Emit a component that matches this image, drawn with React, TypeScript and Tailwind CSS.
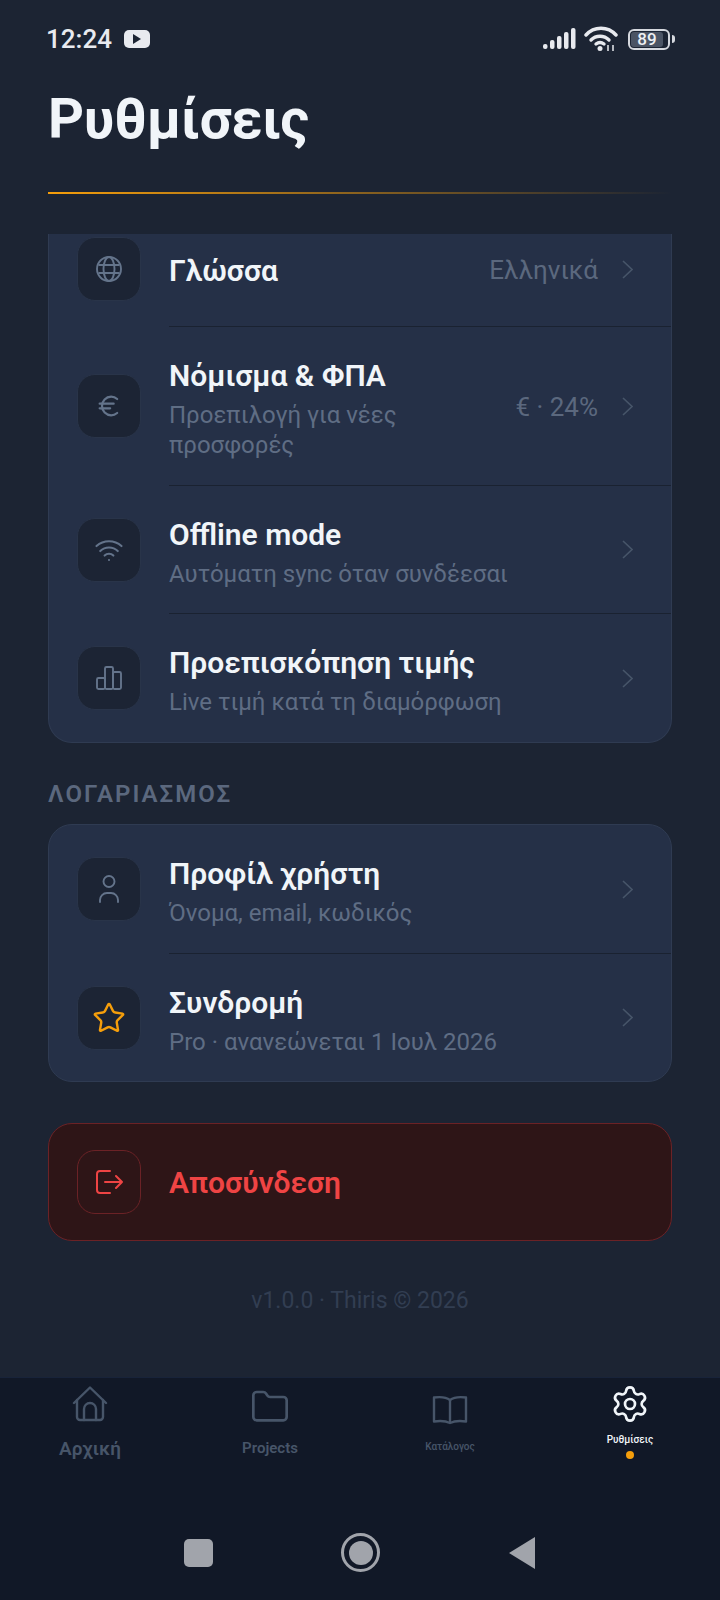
import React from "react";
import { Euro, Folder, Settings, Star, Wifi } from "lucide-react";

const font = { fontFamily: "Roboto, sans-serif" };

const IconBox: React.FC<{ children: React.ReactNode; danger?: boolean }> = ({ children, danger }) => (
  <div
    className={
      danger
        ? "flex h-[64px] w-[64px] shrink-0 items-center justify-center rounded-[18px] border border-[#6b2226] bg-[#2e1517]"
        : "flex h-[64px] w-[64px] shrink-0 items-center justify-center rounded-[18px] border border-[#293449] bg-[#1c2434]"
    }
  >
    {children}
  </div>
);

const Chevron = () => (
  <svg width="11" height="19" viewBox="0 0 11 19" fill="none" stroke="#475569" strokeWidth="1.6" className="ml-[24px] shrink-0">
    <path d="M1 1l9 8.500-9 8.500" />
  </svg>
);

const Row: React.FC<{
  icon: React.ReactNode;
  title: string;
  sub?: string;
  value?: string;
  rowClass?: string;
}> = ({ icon, title, sub, value, rowClass }) => (
  <div className={`flex items-center pl-[28px] pr-[38px] ${rowClass ?? "h-[128px]"}`}>
    <IconBox>{icon}</IconBox>
    <div className={sub ? "ml-[28px] min-w-0 flex-1 pt-[6px]" : "ml-[28px] min-w-0 flex-1 pt-[4px]"}>
      <div className="text-[30px] font-semibold leading-[36px] text-[#f1f5f9]">{title}</div>
      {sub && <div className="mt-[6px] whitespace-pre-line text-[24px] leading-[30px] text-[#5f6d84]">{sub}</div>}
    </div>
    {value && <div className="shrink-0 pt-[2px] text-[26px] text-[#5b687e]">{value}</div>}
    <Chevron />
  </div>
);

const Divider = () => <div className="ml-[120px] h-px bg-[#1a2231]" />;

const GlobeIcon = () => (
  <svg width="28" height="28" viewBox="0 0 28 28" fill="none" stroke="#64748b" strokeWidth="1.9">
    <circle cx="14" cy="14" r="12" />
    <ellipse cx="14" cy="14" rx="5.500" ry="12" />
    <path d="M3.500 10h21M3.500 18h21" />
  </svg>
);

const BarsIcon = () => (
  <svg width="28" height="26" viewBox="0 0 28 26" fill="none" stroke="#64748b" strokeWidth="1.9" strokeLinejoin="round">
    <rect x="2" y="13" width="8" height="11" rx="1.500" />
    <rect x="10" y="2" width="8" height="22" rx="1.500" />
    <rect x="18" y="7" width="8" height="17" rx="1.500" />
  </svg>
);

const PersonIcon = () => (
  <svg width="28" height="30" viewBox="0 0 28 30" fill="none" stroke="#64748b" strokeWidth="1.9" strokeLinecap="round">
    <circle cx="14" cy="7.500" r="5.500" />
    <path d="M5 28v-2a7 7 0 0 1 7-7h4a7 7 0 0 1 7 7v2" />
  </svg>
);

const LogoutIcon = () => (
  <svg width="28" height="26" viewBox="0 0 28 26" fill="none" stroke="#ef4444" strokeWidth="2" strokeLinecap="round" strokeLinejoin="round">
    <path d="M15 2H5a3 3 0 0 0-3 3v16a3 3 0 0 0 3 3h10" />
    <path d="M10 13h17M21 7l6 6-6 6" />
  </svg>
);

const HomeIcon = () => (
  <svg width="36" height="36" viewBox="0 0 36 36" fill="none" stroke="#475569" strokeWidth="2.400" strokeLinecap="round" strokeLinejoin="round">
    <path d="M2 17L18 1.500 34 17" />
    <path d="M5 14v17a3 3 0 0 0 3 3h20a3 3 0 0 0 3-3V14" />
    <path d="M12 34V23a6 6 0 0 1 12 0v11" />
  </svg>
);

const BookIcon = () => (
  <svg width="36" height="30" viewBox="0 0 36 30" fill="none" stroke="#475569" strokeWidth="2.400" strokeLinejoin="round">
    <path d="M18 5C14 2 9 1.500 2 2.500v24C9 25.500 14 26 18 28c4-2 9-2.500 16-1.500v-24C27 1.500 22 2 18 5z" />
    <path d="M18 5v23" />
  </svg>
);

const NavItem: React.FC<{
  icon: React.ReactNode;
  label: string;
  labelClass: string;
  active?: boolean;
}> = ({ icon, label, labelClass, active }) => (
  <div className="flex flex-col items-center">
    <div className="flex h-[52px] items-center">{icon}</div>
    <div className={labelClass}>{label}</div>
    {active && <div className="mt-[4px] h-[8px] w-[8px] rounded-full bg-[#f59e0b]" />}
  </div>
);

const StatusBar = () => (
  <div className="flex h-[78px] shrink-0 items-center justify-between pl-[46px] pr-[45px]">
    <div className="flex items-center gap-[12px]">
      <span className="text-[26px] font-medium leading-none text-[#e8eaef]">12:24</span>
      <span className="flex h-[18px] w-[26px] items-center justify-center rounded-[5px] bg-[#e8eaef]">
        <svg width="9" height="10" viewBox="0 0 9 10" fill="#1c2433">
          <path d="M1 0l8 5-8 5z" />
        </svg>
      </span>
    </div>
    <div className="flex items-center">
      <svg width="33" height="22" viewBox="0 0 33 22" fill="#e8eaef">
        <rect x="0" y="16" width="4.500" height="5" rx="2" />
        <rect x="7" y="12" width="4.500" height="9" rx="2" />
        <rect x="14" y="8" width="4.500" height="13" rx="2" />
        <rect x="21" y="4" width="4.500" height="17" rx="2" />
        <rect x="28" y="0" width="4.500" height="21" rx="2" />
      </svg>
      <svg width="34" height="26" viewBox="0 0 34 26" fill="none" stroke="#e8eaef" strokeWidth="3.400" strokeLinecap="round" className="ml-[8px]">
        <path d="M2 9C10 0 24 0 32 9" />
        <path d="M7 14c5-5 13-5 18 0" />
        <path d="M12 18c2.500-2 5.500-2 8 0" />
        <circle cx="16" cy="22.500" r="2.500" fill="#e8eaef" stroke="none" />
        <path d="M24 25v-6M29 19v6" strokeWidth="1.500" strokeLinecap="butt" />
      </svg>
      <span className="ml-[10px] flex h-[21px] w-[42px] items-center justify-center rounded-[6px] border-2 border-[#d5d8de] p-[1px]">
        <span className="flex h-full w-[32px] items-center justify-center self-start rounded-[3px] bg-[#4b5464] text-[17px] font-medium leading-none text-[#eef0f3]">89</span>
        <span className="flex-1" />
      </span>
      <span className="ml-[2px] h-[8px] w-[3px] rounded-r-full bg-[#d5d8de]" />
    </div>
  </div>
);

export default function App() {
  return (
    <div className="flex h-[1600px] w-[720px] flex-col overflow-hidden bg-[#1c2433]" style={font}>
      <StatusBar />
      <div className="h-[82px] shrink-0 pl-[48px] text-[56px] font-bold leading-[82px] tracking-[-0.3px] text-[#f1f5f9]">Ρυθμίσεις</div>
      <div className="mx-[48px] mt-[32px] h-[2px] shrink-0 bg-gradient-to-r from-[#f59e0b] to-transparent" />
      <div className="mt-[40px] h-[1143px] shrink-0 overflow-hidden px-[48px]">
        <div className="rounded-b-[24px] border-x border-b border-[#2f3b52] bg-[#253047]">
          <Row
            icon={<GlobeIcon />}
            title="Γλώσσα"
            value="Ελληνικά"
            rowClass="pt-[3px] pb-[25px]"
          />
          <Divider />
          <Row
            icon={<Euro size={28} strokeWidth={1.9} color="#64748b" />}
            title="Νόμισμα & ΦΠΑ"
            sub={"Προεπιλογή για νέες\nπροσφορές"}
            value="€ · 24%"
            rowClass="h-[158px]"
          />
          <Divider />
          <Row
            icon={<Wifi size={30} strokeWidth={1.7} color="#64748b" />}
            title="Offline mode"
            sub="Αυτόματη sync όταν συνδέεσαι"
            rowClass="h-[127px]"
          />
          <Divider />
          <Row
            icon={<BarsIcon />}
            title="Προεπισκόπηση τιμής"
            sub="Live τιμή κατά τη διαμόρφωση"
          />
        </div>
        <div className="mt-[36px] text-[24px] font-semibold leading-[30px] tracking-[2px] text-[#5b687e]">ΛΟΓΑΡΙΑΣΜΟΣ</div>
        <div className="mt-[15px] rounded-[24px] border border-[#2f3b52] bg-[#253047]">
          <Row icon={<PersonIcon />} title="Προφίλ χρήστη" sub="Όνομα, email, κωδικός" />
          <Divider />
          <Row
            icon={<Star size={34} strokeWidth={1.7} color="#f59e0b" />}
            title="Συνδρομή"
            sub="Pro · ανανεώνεται 1 Ιουλ 2026"
            rowClass="h-[127px]"
          />
        </div>
        <div className="mt-[41px] flex h-[118px] items-center rounded-[24px] border border-[#6b2226] bg-[#2e1517] pl-[28px]">
          <IconBox danger>
            <LogoutIcon />
          </IconBox>
          <div className="ml-[28px] text-[30px] font-semibold text-[#ef4444]">Αποσύνδεση</div>
        </div>
        <div className="mt-[45px] text-center text-[23px] leading-[30px] text-[#323e52]">v1.0.0 · Thiris © 2026</div>
      </div>
      <div className="grid h-[144px] shrink-0 grid-cols-4 border-t border-[#18233a] bg-[#111827]">
        <NavItem icon={<HomeIcon />} label="Αρχική" labelClass="mt-[5px] text-[19px] font-semibold text-[#475569]" />
        <NavItem icon={<div className="mt-[6px]"><Folder size={40} strokeWidth={1.600} color="#475569" /></div>} label="Projects" labelClass="mt-[7px] text-[15px] font-semibold text-[#475569]" />
        <NavItem icon={<div className="mt-[12px]"><BookIcon /></div>} label="Κατάλογος" labelClass="mt-[9px] text-[10px] font-medium text-[#475569]" />
        <NavItem active icon={<Settings size={40} strokeWidth={1.600} color="#f1f5f9" />} label="Ρυθμίσεις" labelClass="mt-[2px] text-[10px] font-medium text-[#f1f5f9]" />
      </div>
      <div className="flex flex-1 items-center justify-center gap-[128px] bg-[#111827] pb-[16px]">
        <div className="h-[28px] w-[29px] rounded-[5px] bg-[#a1a4ab]" />
        <div className="flex h-[39px] w-[39px] items-center justify-center rounded-full border-[3px] border-[#a1a4ab]">
          <div className="h-[24px] w-[24px] rounded-full bg-[#a1a4ab]" />
        </div>
        <svg width="28" height="34" viewBox="0 0 28 34" fill="#a1a4ab">
          <path d="M27 1v32L1 17z" />
        </svg>
      </div>
    </div>
  );
}
